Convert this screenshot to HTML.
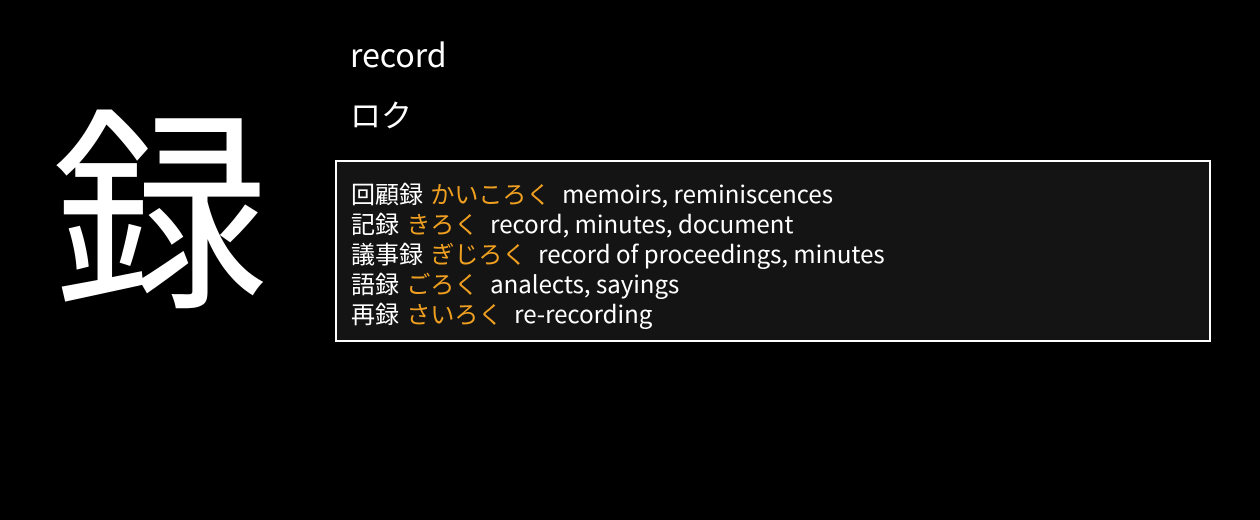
<!DOCTYPE html>
<html><head><meta charset="utf-8"><style>
html,body{margin:0;padding:0;background:#000;width:1260px;height:520px;overflow:hidden}
body{font-family:"Noto Sans CJK JP","Liberation Sans",sans-serif;color:#fff;position:relative}
.k{position:absolute;left:50px;top:53px;font-size:216px;line-height:290px;width:220px;text-align:center}
.w{position:absolute;left:350px;top:34px;font-size:32px;line-height:40px}
.r{position:absolute;left:350px;top:94px;font-size:31px;line-height:40px}
.box{position:absolute;left:335px;top:160px;width:872px;height:178px;border:2px solid #fff;background:#141414;box-sizing:content-box}
.lines{position:absolute;left:14px;top:16px;font-size:24px;line-height:30px;white-space:nowrap}
.o{color:#f0a020;margin-left:2px;margin-right:1px}
</style></head><body>
<div class="k">録</div>
<div class="w">record</div>
<div class="r">ロク</div>
<div class="box"><div class="lines">
<div>回顧録 <span class="o">かいころく</span>&nbsp; memoirs, reminiscences</div>
<div>記録 <span class="o">きろく</span>&nbsp; record, minutes, document</div>
<div>議事録 <span class="o">ぎじろく</span>&nbsp; record of proceedings, minutes</div>
<div>語録 <span class="o">ごろく</span>&nbsp; analects, sayings</div>
<div>再録 <span class="o">さいろく</span>&nbsp; re-recording</div>
</div></div>
</body></html>
